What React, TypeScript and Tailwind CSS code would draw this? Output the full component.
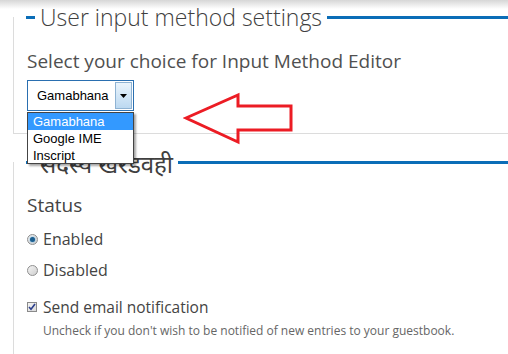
import React from "react";

const BLUE = "bg-[#0b6db7]";

const Legend = ({ text, devanagari = false }: { text: string; devanagari?: boolean }) => (
  <div className="-mt-[17px] -ml-px h-[35px] flex items-center">
    <span className={`w-[9px] h-[3px] ${BLUE}`} />
    <h2
      className={`px-[5px] leading-none text-[#3f3f3f] whitespace-nowrap ${
        devanagari ? "text-[24px] font-normal pt-[3px]" : "text-[23px] font-light"
      }`}
    >
      {text}
    </h2>
    <span className={`flex-1 h-[3px] ${BLUE}`} />
  </div>
);

const Radio = ({ checked }: { checked?: boolean }) => (
  <span className="w-[11px] h-[11px] rounded-full border border-[#8f8f8f] bg-linear-to-br from-[#f4f4f4] to-[#cfcfcf] flex items-center justify-center">
    {checked && <span className="w-[5px] h-[5px] rounded-full bg-[#1d5f8f] shadow-[0_0_2px_#4aa3e0]" />}
  </span>
);

const Checkbox = () => (
  <span className="w-[10px] h-[10px] border border-[#8a8a8a] bg-linear-to-br from-[#f4f4f4] to-[#dadada] flex items-center justify-center">
    <svg width="8" height="8" viewBox="0 0 8 8">
      <path d="M1 4 L3 6.3 L7 1" fill="none" stroke="#2b3f8c" strokeWidth="1.6" />
    </svg>
  </span>
);

export default function App() {
  return (
    <div
      className="relative w-[508px] h-[354px] overflow-hidden bg-white"
      style={{ fontFamily: '"Open Sans", "Noto Sans", sans-serif' }}
    >
      <div className="absolute inset-x-0 top-0 h-[9px] bg-linear-to-b from-[#d6d6d6] to-white/0" />

      <div className="pt-[17px] pl-[13px] flex flex-col">
        <section className="h-[117px] border-l border-b border-[#dcdcdc] pl-[13px]">
          <Legend text="User input method settings" />
          <p className="mt-[13px] text-[19px] leading-[26px] text-[#505050]">
            Select your choice for Input Method Editor
          </p>
          <div
            className="relative mt-[6px] w-[107px]"
            style={{ fontFamily: '"Liberation Sans", Arial, sans-serif' }}
          >
            <div className="h-[31px] border border-[#2a6fb0] flex items-stretch bg-white">
              <span className="flex-1 pl-[9px] flex items-center text-[13px] text-black">Gamabhana</span>
              <span className="w-[17px] m-px border border-[#8fb3d3] bg-linear-to-b from-[#eaf4fc] to-[#bcd9f1] flex items-center justify-center">
                <svg width="7" height="4" viewBox="0 0 7 4">
                  <path d="M0 0 H7 L3.5 4 Z" fill="#000" />
                </svg>
              </span>
            </div>
            <ul className="absolute left-0 top-[32px] w-[107px] border border-[#444] bg-white text-[13px] leading-[17px] shadow-[2px_2px_2px_rgba(0,0,0,0.35)] z-10">
              <li className="h-[17px] pl-[5px] bg-[#3399ff] text-white">Gamabhana</li>
              <li className="h-[17px] pl-[5px] text-black">Google IME</li>
              <li className="h-[16px] pl-[5px] text-black">Inscript</li>
            </ul>
          </div>
        </section>

        <section className="mt-[28px] h-[200px] border-l border-[#dcdcdc] pl-[13px]">
          <Legend text="सदस्य खरडवही" devanagari />
          <h3 className="mt-[12px] text-[19px] leading-[26px] text-[#444]">Status</h3>
          <div className="mt-[10px] flex flex-col gap-[9px] text-[16px] leading-[22px] text-[#444]">
            <label className="flex items-center gap-[5px]">
              <Radio checked />
              Enabled
            </label>
            <label className="flex items-center gap-[5px]">
              <Radio />
              Disabled
            </label>
          </div>
          <label className="mt-[15px] flex items-center gap-[6px] text-[15.5px] leading-[22px] text-[#444]">
            <Checkbox />
            Send email notification
          </label>
          <p className="mt-[5px] pl-[16px] text-[12px] leading-[16px] text-[#666]">
            Uncheck if you don't wish to be notified of new entries to your guestbook.
          </p>
        </section>
      </div>

      <svg className="absolute left-[183px] top-[91px]" width="112" height="55" viewBox="0 0 112 55">
        <polygon
          points="3,27 55,4 55,15 108,15 108,39 55,39 55,51"
          fill="none"
          stroke="#ec1c24"
          strokeWidth="3"
        />
      </svg>
    </div>
  );
}
